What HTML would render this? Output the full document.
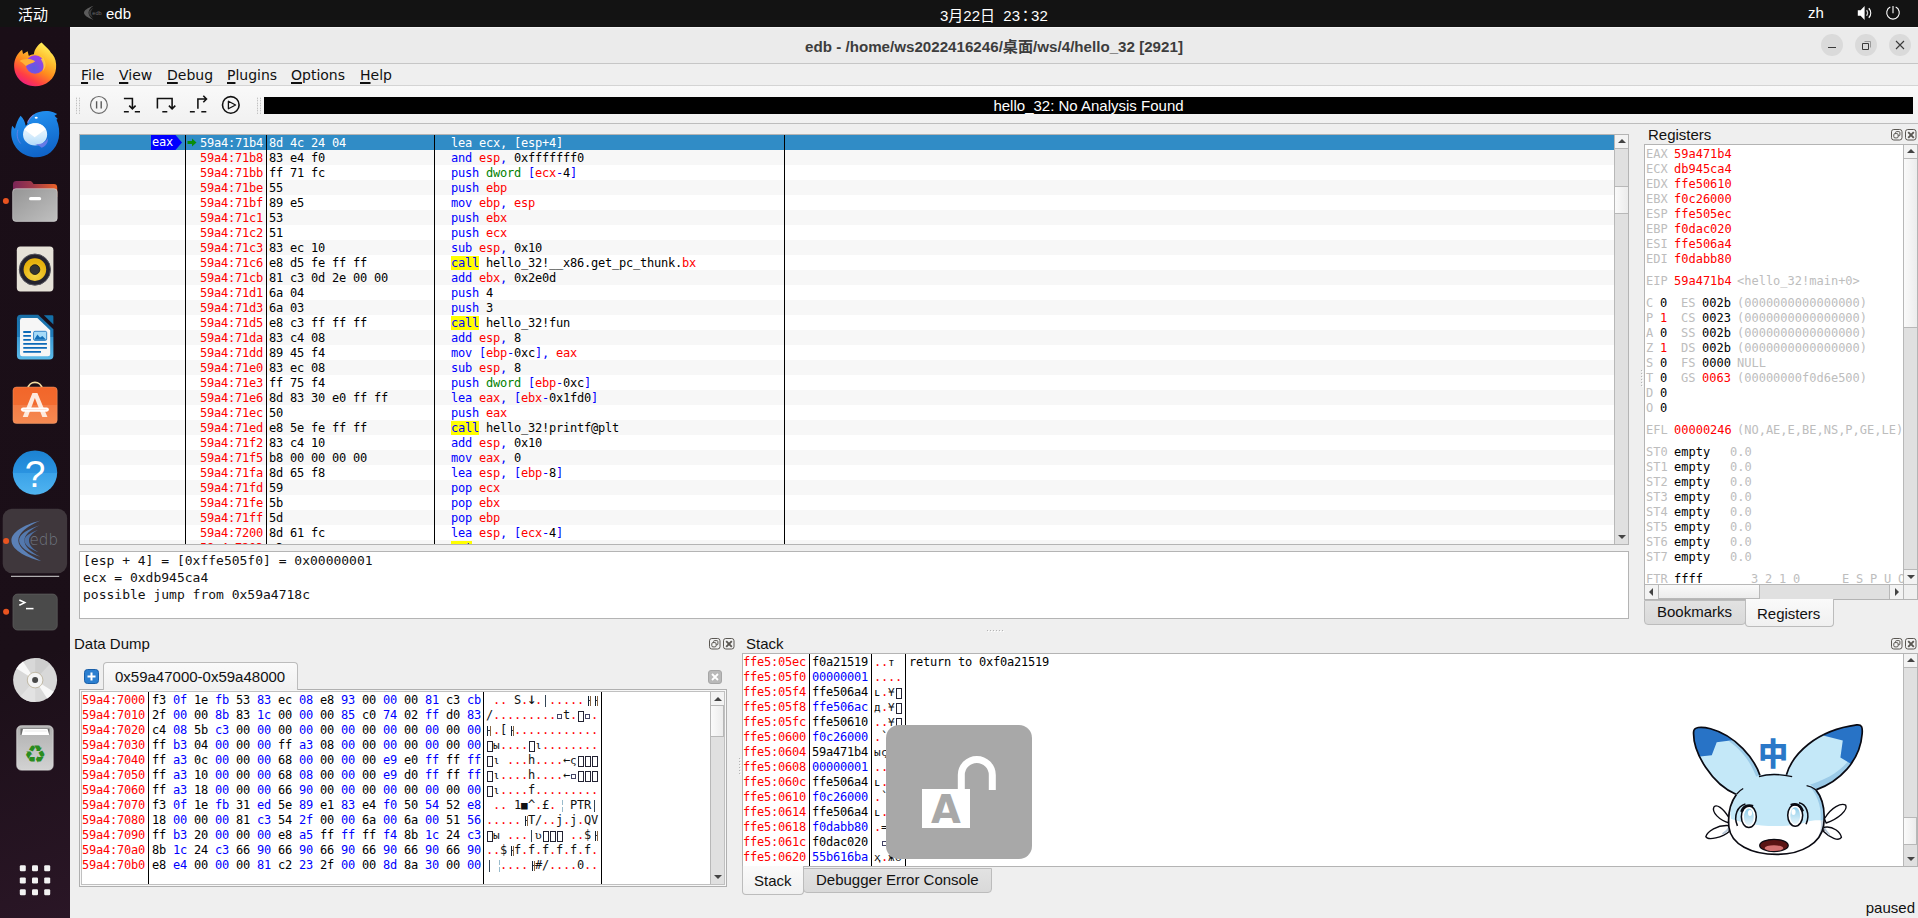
<!DOCTYPE html>
<html lang="zh"><head><meta charset="utf-8"><title>edb</title>
<style>
*{box-sizing:border-box;margin:0;padding:0}
html,body{width:1918px;height:918px;overflow:hidden;background:#efefef}
body{position:relative;font-family:"Liberation Sans","Noto Sans CJK SC",sans-serif;font-size:15px;color:#111}
svg{position:absolute;overflow:visible}
#topbar{position:absolute;left:0;top:0;width:1918px;height:27px;background:#131313;color:#fff}
#topbar span{position:absolute;white-space:nowrap;font-size:15px}
#dock{position:absolute;left:0;top:27px;width:70px;height:891px;background:linear-gradient(160deg,#1a0e17 0%,#1b0f18 70%,#2a1626 100%)}
#dock div{position:absolute}
.dot{left:3px;width:5px;height:5px;border-radius:3px;background:#e95420}
#win{position:absolute;left:70px;top:27px;width:1848px;height:891px;background:#efefef}
#title{position:absolute;left:0;top:0;width:1848px;height:37px;background:#ebebeb;border-top:1px solid #f6f6f6;border-bottom:1px solid #c6c6c6}
#title .t{position:absolute;left:0;width:1848px;top:6px;text-align:center;font-weight:bold;font-size:15.15px;color:#3d3d3d;white-space:nowrap}
.wb{position:absolute;top:6px;width:22px;height:22px;border-radius:11px;background:#dadada}
#menubar{position:absolute;left:0;top:37px;width:1848px;height:22px;background:#efefef;border-bottom:1px solid #d4d4d4;font-family:"DejaVu Sans","Liberation Sans",sans-serif;font-size:14px;color:#111}
#menubar span{position:absolute;top:3px;white-space:nowrap}
#menubar u{text-decoration:underline;text-underline-offset:2px;text-decoration-thickness:1.6px}
#toolbar{position:absolute;left:0;top:59px;width:1848px;height:38px;background:linear-gradient(#f9f9f9,#f1f1f1);border-bottom:1px solid #bdbdbd}
.grip{position:absolute;top:11px;width:5px;height:17px;background-image:radial-gradient(circle,#b4b4b4 0.6px,transparent 0.9px);background-size:3px 2.5px}
#anabar{position:absolute;left:194px;top:11px;width:1649px;height:17px;background:#000;color:#fff;text-align:center;font-size:15px;line-height:18px}
.mono{font-family:"DejaVu Sans Mono","Liberation Mono",monospace;font-size:12px;letter-spacing:-0.225px;white-space:pre}
.r{color:#ff0000}.b{color:#0000ff}.g{color:#007f00}.y{color:#0000ff;background:#ffff00}
/* disasm */
#dis{position:absolute;left:79px;top:134px;width:1550px;height:411px;border:1px solid #b4b4b4;background:#fff;overflow:hidden}
#disin{position:absolute;left:0;top:0;width:1534px;height:409px;overflow:hidden}
.dr{position:absolute;left:0;width:1534px;height:15px;line-height:15px}
.dr.odd{background:#f7f7f7}.dr.even{background:#fff}
.dr.sel{background:#308cc6;color:#fff}
.dr.sel span{color:#fff !important;background:transparent !important}
.dr span.da,.dr span.db,.dr span.di{top:1px}
.dr span.da{position:absolute;left:120px;color:#ff0000}
.dr span.db{position:absolute;left:189px;color:#000}
.dr span.di{position:absolute;left:371px;color:#000}
.vl{position:absolute;top:0;width:1px;height:409px;background:#000;z-index:3}
.dr.sel span.eaxtag{position:absolute;left:71px;top:0;width:24px;height:15px;background:#0000ff !important;color:#fff;padding-left:1px}
svg.eaxarr{left:95px;top:0}
svg.ip{left:107px;top:3px}
/* scrollbars */
.sbv{position:absolute;width:15px;background:#e0e0e0;border-left:1px solid #b8b8b8}
.sbh{position:absolute;height:15px;background:#e0e0e0;border-top:1px solid #b8b8b8}
.sbtn{position:absolute;background:#f3f3f3}
.sthumb{position:absolute;background:linear-gradient(90deg,#fafafa,#ececec);border:1px solid #b8b8b8}
.arr{position:absolute;width:0;height:0}
.arr.up{border-left:4px solid transparent;border-right:4px solid transparent;border-bottom:4px solid #444}
.arr.dn{border-left:4px solid transparent;border-right:4px solid transparent;border-top:4px solid #444}
.arr.lf{border-top:4px solid transparent;border-bottom:4px solid transparent;border-right:4px solid #444}
.arr.rt{border-top:4px solid transparent;border-bottom:4px solid transparent;border-left:4px solid #444}
/* info */
#info{position:absolute;left:79px;top:551px;width:1550px;height:68px;border:1px solid #b4b4b4;background:#fff;font-family:"DejaVu Sans Mono",monospace;font-size:13px;line-height:17px;padding:0 0 0 3px;white-space:pre;color:#111}
.docktitle{position:absolute;font-size:15px;color:#111;white-space:nowrap}
.dbtn{position:absolute;width:11px;height:11px;border:1px solid #555;border-radius:2.5px;background:#ececec}
/* regs */
#regs{position:absolute;left:1644px;top:144px;width:274px;height:456px;border:1px solid #b4b4b4;background:#fff;overflow:hidden}
#regsin{position:absolute;left:0;top:0;width:258px;height:439px;overflow:hidden;color:#000}
#regsin div{position:absolute;left:1px;height:15px;line-height:15px;letter-spacing:0}
#regsin div span{position:absolute;top:0}
.gr{color:#bdbdbd}
/* tabs */
.tab{position:absolute;font-size:15px;color:#111;white-space:nowrap;border:1px solid #bcbcbc}
.tab.on{background:linear-gradient(#fafafa,#f0f0f0)}
.tab.off{background:linear-gradient(#e2e2e2,#d9d9d9)}
.tab span{position:absolute}
/* hex */
#hexpane{position:absolute;left:79px;top:689px;width:648px;height:198px;border:1px solid #b0b0b0;background:#f7f7f7}
#hex{position:absolute;left:1px;top:1px;width:644px;height:194px;border:1px solid #c0c0c0;background:#fff;overflow:hidden}
.hr{position:absolute;left:0;height:15px;line-height:15px;width:628px}
.hr span.ha{position:absolute;left:0;color:#ff0000}
.hr span.hb{position:absolute;left:70px;color:#000}
.hr span.hc{position:absolute;left:404px;width:112px;height:15px}
.hc>*,.sc>*{position:absolute;top:0}
i.t{top:2.5px !important;width:6px;height:11px;border:1px solid #223;margin-left:0.5px}
i.q{top:5.5px !important;width:5px;height:5px;border:1px solid #446;margin-left:1px}
i.h{top:3px !important;width:3.5px;height:10px;border-left:1.2px solid #123;border-right:1px solid #864;background:linear-gradient(#334,#334) 0 4px/3px 1px no-repeat}
i.vb{top:2px !important;width:1.2px;height:12px;background:#345;margin-left:3px}
.sm8{font-size:11px}
.big{font-size:16px;margin-left:-1px;top:-2px !important}
/* stack */
#stack{position:absolute;left:742px;top:653px;width:1176px;height:214px;border:1px solid #b4b4b4;background:#fff;overflow:hidden}
.sr{position:absolute;left:0;height:15px;line-height:15px;width:1150px}
.sr>span{top:1px}
.sr span.sa{position:absolute;left:0px;color:#ff0000}
.sr span.sv{position:absolute;left:69px;color:#000}
.sr span.sv.b{color:#0000ff}
.sr span.sc{position:absolute;left:131px;width:30px;height:15px}
.sr span.sm{position:absolute;left:166px;color:#000}
#caps{position:absolute;left:886px;top:725px;width:146px;height:134px;border-radius:13px;background:#a8a8a8;z-index:10}
#caps .body{position:absolute;left:36px;top:64px;width:48px;height:39px;background:#fff;color:#a8a8a8;font-weight:bold;font-size:38.5px;line-height:40px;text-align:center;font-family:"DejaVu Sans","Liberation Sans",sans-serif;overflow:hidden;text-indent:0;padding-top:1px}
.sph{position:absolute;background:linear-gradient(90deg,#b4b4b4 0 1px,transparent 1px) 0 0/3px 1px repeat-x,linear-gradient(90deg,#fff 0 1px,transparent 1px) 1px 1px/3px 1px repeat-x}
.spv{position:absolute;background:linear-gradient(#b4b4b4 0 1px,transparent 1px) 0 0/1px 3px repeat-y,linear-gradient(#fff 0 1px,transparent 1px) 1px 1px/1px 3px repeat-y}
#status{position:absolute;right:3px;top:899px;font-size:15px;color:#111}
#mascot{position:absolute;left:1680px;top:710px;width:200px;height:156px;z-index:9}
#mascot svg{left:0;top:0}
</style></head><body>

<div id="topbar">
 <span style="left:18px;top:3px">活动</span>
 <svg style="left:83px;top:5px" width="20" height="16" viewBox="0 0 20 16"><path d="M10.5 0.8C4.5 3 1 5.5 1 7.8S4.5 12.8 10.5 15C7 12.5 5.6 10.2 5.6 7.8S7 3.2 10.5 0.8Z" fill="#5c5c5c"/><path d="M10.5 2.8C7.5 4.3 5.6 6 5.6 7.8S7.5 11.5 10.5 13C8.8 11.3 8 9.6 8 7.8S8.8 4.4 10.5 2.8Z" fill="#3a3a3a"/><text x="9.3" y="9.8" font-size="5.6" fill="#6a6a6a" font-family="Liberation Sans,sans-serif">edb</text></svg>
 <span style="left:106px;top:5px">edb</span>
 <span style="left:940px;top:4px">3月22日&nbsp; 23<b style="font-weight:normal;font-family:'Noto Sans CJK JP',sans-serif;display:inline-block;width:11px;text-indent:-2px">：</b>32</span>
 <span style="left:1808px;top:4px">zh</span>
 <svg style="left:1857px;top:5px" width="16" height="16" viewBox="0 0 16 16"><path d="M0.8 5.2H3.6L7.6 1V15L3.6 10.8H0.8Z" fill="#fff"/><path d="M9.6 5.2C10.8 6.8 10.8 9.2 9.6 10.8" stroke="#ccc" stroke-width="1.2" fill="none"/><path d="M11.8 3.2C14.3 6 14.3 10 11.8 12.8" stroke="#fff" stroke-width="1.3" fill="none"/></svg>
 <svg style="left:1884.5px;top:5px" width="16" height="16" viewBox="0 0 16 16"><path d="M5.3 2.1A6.3 6.3 0 1 0 10.7 2.1" stroke="#fff" stroke-width="1.1" fill="none"/><path d="M8 1V8.2" stroke="#fff" stroke-width="1.1"/></svg>
</div>

<div id="dock">
<svg style="left:0;top:0" width="70" height="891" viewBox="0 27 70 891">
<defs>
 <linearGradient id="ffg" x1="0.8" y1="0.05" x2="0.25" y2="1"><stop offset="0" stop-color="#fff35c"/><stop offset="0.3" stop-color="#ffbd2e"/><stop offset="0.55" stop-color="#ff8a1e"/><stop offset="0.8" stop-color="#ff3d46"/><stop offset="1" stop-color="#ea1a86"/></linearGradient>
 <radialGradient id="ffp" cx="0.45" cy="0.7" r="0.7"><stop offset="0" stop-color="#5a5fe0"/><stop offset="1" stop-color="#a23ce8"/></radialGradient>
 <linearGradient id="tbg" x1="0.3" y1="0" x2="0.6" y2="1"><stop offset="0" stop-color="#2393f2"/><stop offset="1" stop-color="#0f62c6"/></linearGradient>
 <linearGradient id="tbe" x1="0" y1="0" x2="0" y2="1"><stop offset="0" stop-color="#ffffff"/><stop offset="1" stop-color="#b4dcfa"/></linearGradient>
 <linearGradient id="fob" x1="0" y1="0" x2="1" y2="0"><stop offset="0" stop-color="#7a2557"/><stop offset="0.45" stop-color="#a03a4a"/><stop offset="1" stop-color="#ea6228"/></linearGradient>
 <linearGradient id="fof" x1="0" y1="0" x2="1" y2="1"><stop offset="0" stop-color="#959595"/><stop offset="1" stop-color="#c0c0c0"/></linearGradient>
 <radialGradient id="rby" cx="0.5" cy="0.75" r="0.6"><stop offset="0" stop-color="#f6d648"/><stop offset="1" stop-color="#e6b10c"/></radialGradient>
 <linearGradient id="wrg" x1="0" y1="0" x2="0" y2="1"><stop offset="0" stop-color="#196fa6"/><stop offset="0.49" stop-color="#1f7cba"/><stop offset="0.5" stop-color="#3a9ad4"/><stop offset="1" stop-color="#5cbae8"/></linearGradient>
 <linearGradient id="asg" x1="0" y1="0" x2="0" y2="1"><stop offset="0" stop-color="#f2662a"/><stop offset="0.49" stop-color="#f26c30"/><stop offset="0.5" stop-color="#f47d46"/><stop offset="1" stop-color="#f58a52"/></linearGradient>
 <linearGradient id="hpg" x1="0" y1="0" x2="0" y2="1"><stop offset="0" stop-color="#1c82d2"/><stop offset="0.5" stop-color="#2a93e0"/><stop offset="0.51" stop-color="#3aa2e8"/><stop offset="1" stop-color="#50b4f0"/></linearGradient>
 <linearGradient id="trg" x1="0" y1="0" x2="0" y2="1"><stop offset="0" stop-color="#b0b0b0"/><stop offset="1" stop-color="#d2d2d2"/></linearGradient>
</defs>
<!-- firefox -->
<g transform="translate(0,30) scale(0.07628)">
 <path d="M545 165C600 225 645 255 668 298L690 322C725 365 742 430 735 500C725 640 600 737 460 737C300 737 185 620 185 470C185 380 230 300 290 258L302 315L362 280L378 340C400 325 420 320 445 318C450 260 490 200 545 165Z" fill="url(#ffg)"/>
 <circle cx="460" cy="452" r="122" fill="url(#ffp)"/>
 <path d="M258 405C300 378 400 368 462 410C425 442 385 440 340 472C312 440 285 420 258 405Z" fill="#ffb238"/>
 <path d="M520 335C560 350 580 372 575 378C560 370 545 372 535 380C560 420 585 470 560 540C620 480 610 390 520 335Z" fill="#ffd04a" opacity="0.85"/>
</g>
<!-- thunderbird -->
<g transform="translate(0,100) scale(0.07628)">
 <path d="M270 205C310 240 330 290 336 338L356 322C362 280 390 230 440 190C500 145 620 130 700 160L750 185L715 205L757 250L740 256C775 330 785 420 770 500C740 650 620 752 470 752C300 752 160 620 148 460C145 410 150 370 160 338L196 378C210 310 235 250 270 205Z" fill="url(#tbg)"/>
 <path d="M362 300C372 260 400 225 440 195" stroke="#9a90f0" stroke-width="14" fill="none" opacity="0.8"/>
 <ellipse cx="460" cy="452" rx="158" ry="146" fill="url(#tbe)"/>
 <path d="M318 392L455 492L602 388C570 330 520 306 460 306C400 306 345 335 318 392Z" fill="#fff"/>
 <path d="M318 392L455 492L602 388" stroke="#cfe6f8" stroke-width="6" fill="none"/>
 <path d="M625 500C600 560 520 590 450 572C490 585 520 600 545 625C590 610 640 560 625 500Z" fill="#6f7ce8" opacity="0.9"/>
 <ellipse cx="475" cy="232" rx="20" ry="14" fill="#fff"/>
 <path d="M235 390C215 450 225 520 270 570" stroke="#8a84ea" stroke-width="12" fill="none" opacity="0.7"/>
</g>
<!-- files -->
<g transform="translate(0,168) scale(0.07628)">
 <path d="M170 215Q170 170 215 170H400Q415 170 440 210H705Q750 210 750 255V380H170Z" fill="url(#fob)"/>
 <rect x="166" y="272" width="584" height="428" rx="42" fill="url(#fof)" stroke="#d8d8d8" stroke-width="8"/>
 <rect x="380" y="380" width="160" height="44" rx="22" fill="#fff"/>
</g>
<circle cx="5.9" cy="201" r="3" fill="#e95420"/>
<!-- rhythmbox -->
<rect x="16.8" y="246.6" width="36.6" height="44.8" rx="3.6" fill="#e6e2d8"/>
<circle cx="34.9" cy="269.6" r="15.6" fill="#24232d" stroke="#55545c" stroke-width="1"/>
<circle cx="34.9" cy="269.6" r="11.3" fill="url(#rby)"/>
<circle cx="34.9" cy="269.6" r="4.9" fill="#333" stroke="#111" stroke-width="0.8"/>
<!-- writer -->
<g transform="translate(0,304) scale(0.07628)">
 <path d="M222 190Q222 140 272 140H500L700 330V680Q700 728 650 728H272Q222 728 222 680Z" fill="url(#wrg)"/>
 <path d="M262 215Q262 185 292 185H490L658 345V655Q658 685 628 685H292Q262 685 262 655Z" fill="#f6f6f6"/>
 <path d="M575 148H682Q700 148 700 166V268Z" fill="#1470a8"/>
 <g stroke="#0d6ab8" stroke-width="24"><path d="M305 367H405M305 418H405M305 470H405M305 523H615M305 576H615M305 628H537"/></g>
 <rect x="440" y="358" width="172" height="120" rx="18" fill="#a6dbf8" stroke="#0d6ab8" stroke-width="10"/>
 <path d="M448 470L490 400L525 440L555 420L605 470Z" fill="#1470b8"/>
</g>
<!-- app store -->
<g transform="translate(0,372) scale(0.07628)">
 <path d="M365 228V215A95 95 0 0 1 552 215V228" stroke="#f5dca0" stroke-width="24" fill="none"/>
 <rect x="170" y="197" width="580" height="478" rx="46" fill="url(#asg)" stroke="#f7a070" stroke-width="6"/>
 <path d="M425 275H490L622 590H555L457 340L365 590H298Z" fill="#fdeade"/>
 <rect x="275" y="465" width="366" height="56" rx="28" fill="#fff"/>
 <path d="M305 493H610" stroke="#f8c0a8" stroke-width="6"/>
</g>
<!-- help -->
<circle cx="35" cy="472.6" r="22.2" fill="url(#hpg)"/>
<text x="35" y="486.6" text-anchor="middle" font-family="Liberation Sans,sans-serif" font-size="37" fill="#fff">?</text>
<!-- edb tile -->
<rect x="2.7" y="508.8" width="64.4" height="64.4" rx="9.5" fill="#3f373c"/>
<g transform="translate(0,500) scale(0.1525)">
 <path d="M266 135C150 165 75 215 75 265C75 318 150 370 270 400C190 360 120 315 120 265C120 215 185 170 266 135Z" fill="#5b80b6"/>
 <path d="M262 165C180 190 125 225 125 265C125 305 180 345 265 372C200 340 160 305 160 265C160 228 200 192 262 165Z" fill="#5479ae"/>
 <path d="M250 195C195 215 160 238 160 265C160 292 195 320 252 342C210 318 190 292 190 265C190 240 212 217 250 195Z" fill="#4d70a4"/>
</g>
<text x="29.5" y="545" font-family="DejaVu Sans,Liberation Sans,sans-serif" font-weight="200" font-size="16.5" fill="#727985" textLength="28.5" lengthAdjust="spacingAndGlyphs">edb</text>
<circle cx="6.1" cy="540.9" r="3" fill="#e95420"/>
<rect x="11" y="575.8" width="48.2" height="1" fill="#d6d6d6"/>
<!-- terminal -->
<rect x="13" y="594.1" width="44.2" height="35.9" rx="4.5" fill="#4a4a4a" stroke="#5c5c5c" stroke-width="0.8"/>
<path d="M19.3 600L24.8 602.6L19.3 605.2" stroke="#fff" stroke-width="1.5" fill="none"/>
<path d="M26 608.6H33.5" stroke="#fff" stroke-width="1.5"/>
<circle cx="6.1" cy="611.8" r="3" fill="#e95420"/>
<!-- cd -->
<circle cx="35.1" cy="680.1" r="22" fill="#d8d8d8"/>
<path d="M35.1 680.1L16.5 668.5A22 22 0 0 1 23 661.6Z" fill="#f8f8f8"/>
<path d="M35.1 680.1L53.7 691.7A22 22 0 0 1 47.2 698.6Z" fill="#f8f8f8"/>
<path d="M35.1 680.1L35.1 658.1A22 22 0 0 1 50 663.8Z" fill="#cdcdcd"/>
<path d="M35.1 680.1L35.1 702.1A22 22 0 0 1 20.2 696.4Z" fill="#e2e2e2"/>
<circle cx="35.1" cy="680.1" r="7.8" fill="#f4f4f4" stroke="#a89a78" stroke-width="0.6"/>
<circle cx="35.1" cy="680.1" r="3" fill="#484848"/>
<!-- trash -->
<rect x="16.8" y="725.8" width="36.3" height="44.3" rx="4.5" fill="url(#trg)" stroke="#dcdcdc" stroke-width="0.8"/>
<path d="M20.5 728.5H49.5V735H20.5Z" fill="#6a6a6a"/>
<path d="M23 729H47.5L49.3 735H21.5Z" fill="#fff"/>
<path d="M24.5 731H46.8" stroke="#ccc" stroke-width="0.5"/>
<text x="35.1" y="763" text-anchor="middle" font-family="DejaVu Sans,sans-serif" font-size="25" fill="#2a8c1e">♻</text>
<!-- grid -->
<g fill="#f2f2f2">
 <rect x="19.8" y="865.2" width="6" height="6" rx="1.2"/><rect x="32" y="865.2" width="6" height="6" rx="1.2"/><rect x="44.2" y="865.2" width="6" height="6" rx="1.2"/>
 <rect x="19.8" y="877.4" width="6" height="6" rx="1.2"/><rect x="32" y="877.4" width="6" height="6" rx="1.2"/><rect x="44.2" y="877.4" width="6" height="6" rx="1.2"/>
 <rect x="19.8" y="889.3" width="6" height="6" rx="1.2"/><rect x="32" y="889.3" width="6" height="6" rx="1.2"/><rect x="44.2" y="889.3" width="6" height="6" rx="1.2"/>
</g>
</svg>

</div>

<div id="win">
 <div id="title"><div class="t">edb - /home/ws2022416246/桌面/ws/4/hello_32 [2921]</div>
  <div class="wb" style="left:1751px"></div><div class="wb" style="left:1785px"></div><div class="wb" style="left:1819px"></div>
  <svg style="left:1751px;top:6px" width="90" height="22" viewBox="0 0 90 22"><g stroke="#3a3a3a" stroke-width="1" fill="none"><path d="M7 13.5H15"/><path d="M41.5 9.5H47.5V15.5H41.5Z"/><path d="M43.5 7.5H49.5V13.5" stroke="#999"/><path d="M75 7L83 15M83 7L75 15" stroke-width="1.1"/></g></svg>
 </div>
 <div id="menubar">
  <span style="left:11px"><u>F</u>ile</span>
  <span style="left:49px"><u>V</u>iew</span>
  <span style="left:97px"><u>D</u>ebug</span>
  <span style="left:157px"><u>P</u>lugins</span>
  <span style="left:221px"><u>O</u>ptions</span>
  <span style="left:290px"><u>H</u>elp</span>
 </div>
 <div id="toolbar">
  <div class="grip" style="left:5px"></div>
  <svg style="left:18px;top:9px" width="160" height="22" viewBox="88 95 160 22">
   <g fill="none" stroke="#111" stroke-width="1.55">
    <circle cx="98.9" cy="104.9" r="8.4" stroke="#6a6a6a" stroke-width="1.2"/>
    <path d="M96.6 101.3V108.6M101.2 101.3V108.6" stroke="#5a5a5a" stroke-width="1.4"/>
    <path d="M123.9 98.4H132.4V108.3M129.2 105.6L132.4 108.8L135.6 105.6M123.9 111.8H128.8M134.8 111.8H140"/>
    <path d="M157.4 108.6V98.5H172.1V108.3M168.9 105.6L172.1 108.8L175.3 105.6M162.3 111.8H167.3"/>
    <path d="M189.9 111.8H194.8M201.3 111.8H206.3M197.9 108.8V99H206M203.3 95.8L206.5 99L203.3 102.2"/>
    <circle cx="230.8" cy="104.9" r="8.3" stroke-width="1.6"/>
    <path d="M228.4 101.2V108.8L235.6 105Z" stroke-width="1.3" stroke-linejoin="round"/>
   </g>
  </svg>
  <div class="grip" style="left:186px"></div>
  <div id="anabar">hello_32: No Analysis Found</div>
 </div>
</div>

<div id="dis" class="mono">
 <div id="disin">
<div class="dr sel" style="top:0px"><span class="eaxtag">eax</span><svg class="eaxarr" width="8" height="15" viewBox="0 0 8 15"><path d="M0 0L0.5 0L7 7.5L0.5 15L0 15Z" fill="#0000ff"/></svg><svg class="ip" width="10" height="9" viewBox="0 0 10 9"><path d="M0.5 3H5V0.5L9.5 4.5L5 8.5V6H0.5Z" fill="#0a8c0a"/></svg><span class="da">59a4:71b4</span><span class="db">8d 4c 24 04</span><span class="di"><span class="b">lea</span> <span class="r">ecx</span><span class="b">,</span> <span class="b">[</span><span class="r">esp</span><span class="b">+</span>4<span class="b">]</span></span></div>
<div class="dr odd" style="top:15px"><span class="da">59a4:71b8</span><span class="db">83 e4 f0</span><span class="di"><span class="b">and</span> <span class="r">esp</span><span class="b">,</span> 0xfffffff0</span></div>
<div class="dr even" style="top:30px"><span class="da">59a4:71bb</span><span class="db">ff 71 fc</span><span class="di"><span class="b">push</span> <span class="g">dword</span> <span class="b">[</span><span class="r">ecx</span><span class="b">-</span>4<span class="b">]</span></span></div>
<div class="dr odd" style="top:45px"><span class="da">59a4:71be</span><span class="db">55</span><span class="di"><span class="b">push</span> <span class="r">ebp</span></span></div>
<div class="dr even" style="top:60px"><span class="da">59a4:71bf</span><span class="db">89 e5</span><span class="di"><span class="b">mov</span> <span class="r">ebp</span><span class="b">,</span> <span class="r">esp</span></span></div>
<div class="dr odd" style="top:75px"><span class="da">59a4:71c1</span><span class="db">53</span><span class="di"><span class="b">push</span> <span class="r">ebx</span></span></div>
<div class="dr even" style="top:90px"><span class="da">59a4:71c2</span><span class="db">51</span><span class="di"><span class="b">push</span> <span class="r">ecx</span></span></div>
<div class="dr odd" style="top:105px"><span class="da">59a4:71c3</span><span class="db">83 ec 10</span><span class="di"><span class="b">sub</span> <span class="r">esp</span><span class="b">,</span> 0x10</span></div>
<div class="dr even" style="top:120px"><span class="da">59a4:71c6</span><span class="db">e8 d5 fe ff ff</span><span class="di"><span class="y">call</span> hello_32!__x86.get_pc_thunk.<span class="r">bx</span></span></div>
<div class="dr odd" style="top:135px"><span class="da">59a4:71cb</span><span class="db">81 c3 0d 2e 00 00</span><span class="di"><span class="b">add</span> <span class="r">ebx</span><span class="b">,</span> 0x2e0d</span></div>
<div class="dr even" style="top:150px"><span class="da">59a4:71d1</span><span class="db">6a 04</span><span class="di"><span class="b">push</span> 4</span></div>
<div class="dr odd" style="top:165px"><span class="da">59a4:71d3</span><span class="db">6a 03</span><span class="di"><span class="b">push</span> 3</span></div>
<div class="dr even" style="top:180px"><span class="da">59a4:71d5</span><span class="db">e8 c3 ff ff ff</span><span class="di"><span class="y">call</span> hello_32!fun</span></div>
<div class="dr odd" style="top:195px"><span class="da">59a4:71da</span><span class="db">83 c4 08</span><span class="di"><span class="b">add</span> <span class="r">esp</span><span class="b">,</span> 8</span></div>
<div class="dr even" style="top:210px"><span class="da">59a4:71dd</span><span class="db">89 45 f4</span><span class="di"><span class="b">mov</span> <span class="b">[</span><span class="r">ebp</span><span class="b">-</span>0xc<span class="b">]</span><span class="b">,</span> <span class="r">eax</span></span></div>
<div class="dr odd" style="top:225px"><span class="da">59a4:71e0</span><span class="db">83 ec 08</span><span class="di"><span class="b">sub</span> <span class="r">esp</span><span class="b">,</span> 8</span></div>
<div class="dr even" style="top:240px"><span class="da">59a4:71e3</span><span class="db">ff 75 f4</span><span class="di"><span class="b">push</span> <span class="g">dword</span> <span class="b">[</span><span class="r">ebp</span><span class="b">-</span>0xc<span class="b">]</span></span></div>
<div class="dr odd" style="top:255px"><span class="da">59a4:71e6</span><span class="db">8d 83 30 e0 ff ff</span><span class="di"><span class="b">lea</span> <span class="r">eax</span><span class="b">,</span> <span class="b">[</span><span class="r">ebx</span><span class="b">-</span>0x1fd0<span class="b">]</span></span></div>
<div class="dr even" style="top:270px"><span class="da">59a4:71ec</span><span class="db">50</span><span class="di"><span class="b">push</span> <span class="r">eax</span></span></div>
<div class="dr odd" style="top:285px"><span class="da">59a4:71ed</span><span class="db">e8 5e fe ff ff</span><span class="di"><span class="y">call</span> hello_32!printf@plt</span></div>
<div class="dr even" style="top:300px"><span class="da">59a4:71f2</span><span class="db">83 c4 10</span><span class="di"><span class="b">add</span> <span class="r">esp</span><span class="b">,</span> 0x10</span></div>
<div class="dr odd" style="top:315px"><span class="da">59a4:71f5</span><span class="db">b8 00 00 00 00</span><span class="di"><span class="b">mov</span> <span class="r">eax</span><span class="b">,</span> 0</span></div>
<div class="dr even" style="top:330px"><span class="da">59a4:71fa</span><span class="db">8d 65 f8</span><span class="di"><span class="b">lea</span> <span class="r">esp</span><span class="b">,</span> <span class="b">[</span><span class="r">ebp</span><span class="b">-</span>8<span class="b">]</span></span></div>
<div class="dr odd" style="top:345px"><span class="da">59a4:71fd</span><span class="db">59</span><span class="di"><span class="b">pop</span> <span class="r">ecx</span></span></div>
<div class="dr even" style="top:360px"><span class="da">59a4:71fe</span><span class="db">5b</span><span class="di"><span class="b">pop</span> <span class="r">ebx</span></span></div>
<div class="dr odd" style="top:375px"><span class="da">59a4:71ff</span><span class="db">5d</span><span class="di"><span class="b">pop</span> <span class="r">ebp</span></span></div>
<div class="dr even" style="top:390px"><span class="da">59a4:7200</span><span class="db">8d 61 fc</span><span class="di"><span class="b">lea</span> <span class="r">esp</span><span class="b">,</span> <span class="b">[</span><span class="r">ecx</span><span class="b">-</span>4<span class="b">]</span></span></div>
<div class="dr odd" style="top:405px"><span class="da">59a4:7203</span><span class="db">c3</span><span class="di"><span class="y">ret</span></span></div>
 </div>
 <div class="vl" style="left:105px"></div>
 <div class="vl" style="left:186px"></div>
 <div class="vl" style="left:354px"></div>
 <div class="vl" style="left:704px"></div>
 <div class="sbv" style="left:1534px;top:0;height:409px">
  <div class="sbtn" style="left:0;top:0;width:14px;height:14px;border-bottom:1px solid #b8b8b8"><div class="arr up" style="left:3px;top:4px"></div></div>
  <div class="sthumb" style="left:-1px;top:51px;width:15px;height:28px"></div>
  <div class="sbtn" style="left:0;top:394px;width:14px;height:15px;background:transparent"><div class="arr dn" style="left:3px;top:6px"></div></div>
 </div>
</div>

<div id="info"><div style="position:relative;top:-0.5px">[esp + 4] = [0xffe505f0] = 0x00000001
ecx = 0xdb945ca4
possible jump from 0x59a4718c</div></div>

<div class="docktitle" style="left:1648px;top:126px">Registers</div>
<svg class="dbt" style="left:1891px;top:129px" width="26" height="12" viewBox="0 0 26 12"><g fill="none" stroke="#5a5752"><rect x="0.5" y="0.5" width="10.5" height="10.5" rx="2.3" fill="#f2f2f2"/><rect x="14.5" y="0.5" width="10.5" height="10.5" rx="2.3" fill="#f2f2f2"/><rect x="4.6" y="2.6" width="4.3" height="4.3" rx="1"/><rect x="2.8" y="4.6" width="4.3" height="4.3" rx="1.2" fill="#f6f6f6"/><path d="M17.2 3.2L22.8 8.8M22.8 3.2L17.2 8.8" stroke-width="1.9"/></g></svg>
<div id="regs" class="mono">
 <div id="regsin">
<div style="top:2px"><span class="gr" style="left:0px">EAX</span><span class="r" style="left:28px">59a471b4</span></div>
<div style="top:17px"><span class="gr" style="left:0px">ECX</span><span class="r" style="left:28px">db945ca4</span></div>
<div style="top:32px"><span class="gr" style="left:0px">EDX</span><span class="r" style="left:28px">ffe50610</span></div>
<div style="top:47px"><span class="gr" style="left:0px">EBX</span><span class="r" style="left:28px">f0c26000</span></div>
<div style="top:62px"><span class="gr" style="left:0px">ESP</span><span class="r" style="left:28px">ffe505ec</span></div>
<div style="top:77px"><span class="gr" style="left:0px">EBP</span><span class="r" style="left:28px">f0dac020</span></div>
<div style="top:92px"><span class="gr" style="left:0px">ESI</span><span class="r" style="left:28px">ffe506a4</span></div>
<div style="top:107px"><span class="gr" style="left:0px">EDI</span><span class="r" style="left:28px">f0dabb80</span></div>
<div style="top:129px"><span class="gr" style="left:0px">EIP</span><span class="r" style="left:28px">59a471b4</span><span class="gr" style="left:91px">&lt;hello_32!main+0&gt;</span></div>
<div style="top:151px"><span class="gr" style="left:0px">C</span><span class="" style="left:14px">0</span><span class="gr" style="left:35px">ES</span><span class="" style="left:56px">002b</span><span class="gr" style="left:91px">(0000000000000000)</span></div>
<div style="top:166px"><span class="gr" style="left:0px">P</span><span class="r" style="left:14px">1</span><span class="gr" style="left:35px">CS</span><span class="" style="left:56px">0023</span><span class="gr" style="left:91px">(0000000000000000)</span></div>
<div style="top:181px"><span class="gr" style="left:0px">A</span><span class="" style="left:14px">0</span><span class="gr" style="left:35px">SS</span><span class="" style="left:56px">002b</span><span class="gr" style="left:91px">(0000000000000000)</span></div>
<div style="top:196px"><span class="gr" style="left:0px">Z</span><span class="r" style="left:14px">1</span><span class="gr" style="left:35px">DS</span><span class="" style="left:56px">002b</span><span class="gr" style="left:91px">(0000000000000000)</span></div>
<div style="top:211px"><span class="gr" style="left:0px">S</span><span class="" style="left:14px">0</span><span class="gr" style="left:35px">FS</span><span class="" style="left:56px">0000</span><span class="gr" style="left:91px">NULL</span></div>
<div style="top:226px"><span class="gr" style="left:0px">T</span><span class="" style="left:14px">0</span><span class="gr" style="left:35px">GS</span><span class="r" style="left:56px">0063</span><span class="gr" style="left:91px">(00000000f0d6e500)</span></div>
<div style="top:241px"><span class="gr" style="left:0px">D</span><span class="" style="left:14px">0</span></div>
<div style="top:256px"><span class="gr" style="left:0px">O</span><span class="" style="left:14px">0</span></div>
<div style="top:278px"><span class="gr" style="left:0px">EFL</span><span class="r" style="left:28px">00000246</span><span class="gr" style="left:91px">(NO,AE,E,BE,NS,P,GE,LE)</span></div>
<div style="top:300px"><span class="gr" style="left:0px">ST0</span><span class="" style="left:28px">empty</span><span class="gr" style="left:84px">0.0</span></div>
<div style="top:315px"><span class="gr" style="left:0px">ST1</span><span class="" style="left:28px">empty</span><span class="gr" style="left:84px">0.0</span></div>
<div style="top:330px"><span class="gr" style="left:0px">ST2</span><span class="" style="left:28px">empty</span><span class="gr" style="left:84px">0.0</span></div>
<div style="top:345px"><span class="gr" style="left:0px">ST3</span><span class="" style="left:28px">empty</span><span class="gr" style="left:84px">0.0</span></div>
<div style="top:360px"><span class="gr" style="left:0px">ST4</span><span class="" style="left:28px">empty</span><span class="gr" style="left:84px">0.0</span></div>
<div style="top:375px"><span class="gr" style="left:0px">ST5</span><span class="" style="left:28px">empty</span><span class="gr" style="left:84px">0.0</span></div>
<div style="top:390px"><span class="gr" style="left:0px">ST6</span><span class="" style="left:28px">empty</span><span class="gr" style="left:84px">0.0</span></div>
<div style="top:405px"><span class="gr" style="left:0px">ST7</span><span class="" style="left:28px">empty</span><span class="gr" style="left:84px">0.0</span></div>
<div style="top:427px"><span class="gr" style="left:0px">FTR</span><span class="" style="left:28px">ffff</span><span class="gr" style="left:105px">3</span><span class="gr" style="left:119px">2</span><span class="gr" style="left:133px">1</span><span class="gr" style="left:147px">0</span><span class="gr" style="left:196px">E</span><span class="gr" style="left:210px">S</span><span class="gr" style="left:224px">P</span><span class="gr" style="left:238px">U</span><span class="gr" style="left:252px">O</span><span class="gr" style="left:266px">Z</span><span class="gr" style="left:280px">D</span><span class="gr" style="left:294px">I</span></div>
 </div>
 <div class="sbv" style="left:258px;top:0;height:439px">
  <div class="sbtn" style="left:0;top:0;width:14px;height:14px;border-bottom:1px solid #b8b8b8"><div class="arr up" style="left:3px;top:4px"></div></div>
  <div class="sthumb" style="left:-1px;top:14px;width:15px;height:169px;border-top:none"></div>
  <div class="sbtn" style="left:0;top:424px;width:14px;height:15px;border-top:1px solid #b8b8b8"><div class="arr dn" style="left:3px;top:5px"></div></div>
 </div>
 <div class="sbh" style="left:0;top:439px;width:258px">
  <div class="sbtn" style="left:0;top:0;width:14px;height:14px;border-right:1px solid #b8b8b8"><div class="arr lf" style="left:4px;top:3px"></div></div>
  <div class="sthumb" style="left:13px;top:-1px;width:102px;height:15px;background:linear-gradient(#fafafa,#ececec)"></div>
  <div class="sbtn" style="left:244px;top:0;width:14px;height:14px;border-left:1px solid #b8b8b8"><div class="arr rt" style="left:5px;top:3px"></div></div>
 </div>
 <div style="position:absolute;left:258px;top:439px;width:15px;height:15px;background:#efefef;border-left:1px solid #b8b8b8;border-top:1px solid #b8b8b8"></div>
</div>
<div class="tab off" style="left:1644px;top:600px;width:102px;height:25px;border-radius:0 0 4px 4px"><span style="left:12px;top:2px">Bookmarks</span></div>
<div class="tab on" style="left:1745px;top:599px;width:89px;height:28px;border-top:none;border-radius:0 0 4px 4px"><span style="left:11px;top:6px">Registers</span></div>

<div class="docktitle" style="left:74px;top:635px">Data Dump</div>
<svg class="dbt" style="left:709px;top:638px" width="26" height="12" viewBox="0 0 26 12"><g fill="none" stroke="#5a5752"><rect x="0.5" y="0.5" width="10.5" height="10.5" rx="2.3" fill="#f2f2f2"/><rect x="14.5" y="0.5" width="10.5" height="10.5" rx="2.3" fill="#f2f2f2"/><rect x="4.6" y="2.6" width="4.3" height="4.3" rx="1"/><rect x="2.8" y="4.6" width="4.3" height="4.3" rx="1.2" fill="#f6f6f6"/><path d="M17.2 3.2L22.8 8.8M22.8 3.2L17.2 8.8" stroke-width="1.9"/></g></svg>
<svg style="left:84px;top:669px" width="15" height="15" viewBox="0 0 15 15"><rect x="0.5" y="0.5" width="14" height="14" rx="3" fill="#2b7fd0" stroke="#1a5fa8"/><path d="M7.5 3.5V11.5M3.5 7.5H11.5" stroke="#fff" stroke-width="2"/></svg>
<div class="tab on" style="left:103px;top:662px;width:195px;height:28px;border-bottom:none;border-radius:4px 4px 0 0;z-index:2"><span style="left:11px;top:5px">0x59a47000-0x59a48000</span></div>
<div style="position:absolute;left:708px;top:670px;width:14px;height:14px;border-radius:3px;background:#b9b9b9;border:1px solid #a6a6a6"><svg style="left:2px;top:2px" width="8" height="8" viewBox="0 0 8 8"><path d="M1 1L7 7M7 1L1 7" stroke="#fff" stroke-width="1.8"/></svg></div>
<div id="hexpane"><div id="hex" class="mono">
<div class="hr" style="top:1px"><span class="ha">59a4:7000</span><span class="hb">f3 <span class="b">0f</span> 1e <span class="b">fb</span> 53 <span class="b">83</span> ec <span class="b">08</span> e8 <span class="b">93</span> 00 <span class="b">00</span> 00 <span class="b">81</span> c3 <span class="b">cb</span></span><span class="hc"><span class="r" style="left:7px">.</span><span class="r" style="left:14px">.</span><span style="left:28px">S</span><span class="r" style="left:35px">.</span><span class="big" style="left:42px">↓</span><span class="r" style="left:49px">.</span><i class="vb" style="left:56px"></i><span class="r" style="left:63px">.</span><span class="r" style="left:70px">.</span><span class="r" style="left:77px">.</span><span class="r" style="left:84px">.</span><span class="r" style="left:91px">.</span><i class="h" style="left:101.5px"></i><i class="h" style="left:108.5px"></i></span></div>
<div class="hr" style="top:16px"><span class="ha">59a4:7010</span><span class="hb">2f <span class="b">00</span> 00 <span class="b">8b</span> 83 <span class="b">1c</span> 00 <span class="b">00</span> 00 <span class="b">85</span> c0 <span class="b">74</span> 02 <span class="b">ff</span> d0 <span class="b">83</span></span><span class="hc"><span style="left:0px">/</span><span class="r" style="left:7px">.</span><span class="r" style="left:14px">.</span><span class="r" style="left:21px">.</span><span class="r" style="left:28px">.</span><span class="r" style="left:35px">.</span><span class="r" style="left:42px">.</span><span class="r" style="left:49px">.</span><span class="r" style="left:56px">.</span><span class="r" style="left:63px">.</span><i class="q" style="left:70px"></i><span style="left:77px">t</span><span class="r" style="left:84px">.</span><i class="t" style="left:91px"></i><i class="q" style="left:98px"></i><span class="r" style="left:105px">.</span></span></div>
<div class="hr" style="top:31px"><span class="ha">59a4:7020</span><span class="hb">c4 <span class="b">08</span> 5b <span class="b">c3</span> 00 <span class="b">00</span> 00 <span class="b">00</span> 00 <span class="b">00</span> 00 <span class="b">00</span> 00 <span class="b">00</span> 00 <span class="b">00</span></span><span class="hc"><i class="h" style="left:1px"></i><span class="r" style="left:7px">.</span><span style="left:14px">[</span><i class="h" style="left:24.5px"></i><span class="r" style="left:28px">.</span><span class="r" style="left:35px">.</span><span class="r" style="left:42px">.</span><span class="r" style="left:49px">.</span><span class="r" style="left:56px">.</span><span class="r" style="left:63px">.</span><span class="r" style="left:70px">.</span><span class="r" style="left:77px">.</span><span class="r" style="left:84px">.</span><span class="r" style="left:91px">.</span><span class="r" style="left:98px">.</span><span class="r" style="left:105px">.</span></span></div>
<div class="hr" style="top:46px"><span class="ha">59a4:7030</span><span class="hb">ff <span class="b">b3</span> 04 <span class="b">00</span> 00 <span class="b">00</span> ff <span class="b">a3</span> 08 <span class="b">00</span> 00 <span class="b">00</span> 00 <span class="b">00</span> 00 <span class="b">00</span></span><span class="hc"><i class="t" style="left:0px"></i><span class="sm8" style="left:7px">ы</span><span class="r" style="left:14px">.</span><span class="r" style="left:21px">.</span><span class="r" style="left:28px">.</span><span class="r" style="left:35px">.</span><i class="t" style="left:42px"></i><span class="sm8" style="left:49px">ι</span><span class="r" style="left:56px">.</span><span class="r" style="left:63px">.</span><span class="r" style="left:70px">.</span><span class="r" style="left:77px">.</span><span class="r" style="left:84px">.</span><span class="r" style="left:91px">.</span><span class="r" style="left:98px">.</span><span class="r" style="left:105px">.</span></span></div>
<div class="hr" style="top:61px"><span class="ha">59a4:7040</span><span class="hb">ff <span class="b">a3</span> 0c <span class="b">00</span> 00 <span class="b">00</span> 68 <span class="b">00</span> 00 <span class="b">00</span> 00 <span class="b">e9</span> e0 <span class="b">ff</span> ff <span class="b">ff</span></span><span class="hc"><i class="t" style="left:0px"></i><span class="sm8" style="left:7px">ι</span><span class="r" style="left:21px">.</span><span class="r" style="left:28px">.</span><span class="r" style="left:35px">.</span><span style="left:42px">h</span><span class="r" style="left:49px">.</span><span class="r" style="left:56px">.</span><span class="r" style="left:63px">.</span><span class="r" style="left:70px">.</span><span style="left:77px">←</span><span class="sm8" style="left:84px">ς</span><i class="t" style="left:91px"></i><i class="t" style="left:98px"></i><i class="t" style="left:105px"></i></span></div>
<div class="hr" style="top:76px"><span class="ha">59a4:7050</span><span class="hb">ff <span class="b">a3</span> 10 <span class="b">00</span> 00 <span class="b">00</span> 68 <span class="b">08</span> 00 <span class="b">00</span> 00 <span class="b">e9</span> d0 <span class="b">ff</span> ff <span class="b">ff</span></span><span class="hc"><i class="t" style="left:0px"></i><span class="sm8" style="left:7px">ι</span><span class="r" style="left:14px">.</span><span class="r" style="left:21px">.</span><span class="r" style="left:28px">.</span><span class="r" style="left:35px">.</span><span style="left:42px">h</span><span class="r" style="left:49px">.</span><span class="r" style="left:56px">.</span><span class="r" style="left:63px">.</span><span class="r" style="left:70px">.</span><span style="left:77px">←</span><i class="q" style="left:84px"></i><i class="t" style="left:91px"></i><i class="t" style="left:98px"></i><i class="t" style="left:105px"></i></span></div>
<div class="hr" style="top:91px"><span class="ha">59a4:7060</span><span class="hb">ff <span class="b">a3</span> 18 <span class="b">00</span> 00 <span class="b">00</span> 66 <span class="b">90</span> 00 <span class="b">00</span> 00 <span class="b">00</span> 00 <span class="b">00</span> 00 <span class="b">00</span></span><span class="hc"><i class="t" style="left:0px"></i><span class="sm8" style="left:7px">ι</span><span class="r" style="left:14px">.</span><span class="r" style="left:21px">.</span><span class="r" style="left:28px">.</span><span class="r" style="left:35px">.</span><span style="left:42px">f</span><span class="r" style="left:49px">.</span><span class="r" style="left:56px">.</span><span class="r" style="left:63px">.</span><span class="r" style="left:70px">.</span><span class="r" style="left:77px">.</span><span class="r" style="left:84px">.</span><span class="r" style="left:91px">.</span><span class="r" style="left:98px">.</span><span class="r" style="left:105px">.</span></span></div>
<div class="hr" style="top:106px"><span class="ha">59a4:7070</span><span class="hb">f3 <span class="b">0f</span> 1e <span class="b">fb</span> 31 <span class="b">ed</span> 5e <span class="b">89</span> e1 <span class="b">83</span> e4 <span class="b">f0</span> 50 <span class="b">54</span> 52 <span class="b">e8</span></span><span class="hc"><span class="r" style="left:7px">.</span><span class="r" style="left:14px">.</span><span style="left:28px">1</span><span class="sm8" style="left:35px">■</span><span style="left:42px">^</span><span class="r" style="left:49px">.</span><span style="left:56px">£</span><span class="r" style="left:63px">.</span><i class="vb" style="left:72.5px;background:linear-gradient(#9bc 0 5px,transparent 5px 7px,#9bc 7px)"></i><span style="left:84px">P</span><span style="left:91px">T</span><span style="left:98px">R</span><i class="vb" style="left:105px"></i></span></div>
<div class="hr" style="top:121px"><span class="ha">59a4:7080</span><span class="hb">18 <span class="b">00</span> 00 <span class="b">00</span> 81 <span class="b">c3</span> 54 <span class="b">2f</span> 00 <span class="b">00</span> 6a <span class="b">00</span> 6a <span class="b">00</span> 51 <span class="b">56</span></span><span class="hc"><span class="r" style="left:0px">.</span><span class="r" style="left:7px">.</span><span class="r" style="left:14px">.</span><span class="r" style="left:21px">.</span><span class="r" style="left:28px">.</span><i class="h" style="left:38.5px"></i><span style="left:42px">T</span><span style="left:49px">/</span><span class="r" style="left:56px">.</span><span class="r" style="left:63px">.</span><span style="left:70px">j</span><span class="r" style="left:77px">.</span><span style="left:84px">j</span><span class="r" style="left:91px">.</span><span style="left:98px">Q</span><span style="left:105px">V</span></span></div>
<div class="hr" style="top:136px"><span class="ha">59a4:7090</span><span class="hb">ff <span class="b">b3</span> 20 <span class="b">00</span> 00 <span class="b">00</span> e8 <span class="b">a5</span> ff <span class="b">ff</span> ff <span class="b">f4</span> 8b <span class="b">1c</span> 24 <span class="b">c3</span></span><span class="hc"><i class="t" style="left:0px"></i><span class="sm8" style="left:7px">ы</span><span class="r" style="left:21px">.</span><span class="r" style="left:28px">.</span><span class="r" style="left:35px">.</span><i class="vb" style="left:42px"></i><span class="sm8" style="left:49px">ʋ</span><i class="t" style="left:56px"></i><i class="t" style="left:63px"></i><i class="t" style="left:70px"></i><span class="r" style="left:84px">.</span><span class="r" style="left:91px">.</span><span style="left:98px">$</span><i class="h" style="left:108.5px"></i></span></div>
<div class="hr" style="top:151px"><span class="ha">59a4:70a0</span><span class="hb">8b <span class="b">1c</span> 24 <span class="b">c3</span> 66 <span class="b">90</span> 66 <span class="b">90</span> 66 <span class="b">90</span> 66 <span class="b">90</span> 66 <span class="b">90</span> 66 <span class="b">90</span></span><span class="hc"><span class="r" style="left:0px">.</span><span class="r" style="left:7px">.</span><span style="left:14px">$</span><i class="h" style="left:24.5px"></i><span style="left:28px">f</span><span class="r" style="left:35px">.</span><span style="left:42px">f</span><span class="r" style="left:49px">.</span><span style="left:56px">f</span><span class="r" style="left:63px">.</span><span style="left:70px">f</span><span class="r" style="left:77px">.</span><span style="left:84px">f</span><span class="r" style="left:91px">.</span><span style="left:98px">f</span><span class="r" style="left:105px">.</span></span></div>
<div class="hr" style="top:166px"><span class="ha">59a4:70b0</span><span class="hb">e8 <span class="b">e4</span> 00 <span class="b">00</span> 00 <span class="b">81</span> c2 <span class="b">23</span> 2f <span class="b">00</span> 00 <span class="b">8d</span> 8a <span class="b">30</span> 00 <span class="b">00</span></span><span class="hc"><i class="vb" style="left:0px"></i><i class="vb" style="left:9.5px;background:linear-gradient(#9bc 0 5px,transparent 5px 7px,#9bc 7px)"></i><span class="r" style="left:14px">.</span><span class="r" style="left:21px">.</span><span class="r" style="left:28px">.</span><span class="r" style="left:35px">.</span><i class="h" style="left:45.5px"></i><span style="left:49px">#</span><span style="left:56px">/</span><span class="r" style="left:63px">.</span><span class="r" style="left:70px">.</span><span class="r" style="left:77px">.</span><span class="r" style="left:84px">.</span><span style="left:91px">0</span><span class="r" style="left:98px">.</span><span class="r" style="left:105px">.</span></span></div>
 <div class="vl" style="left:66px;height:192px"></div>
 <div class="vl" style="left:401px;height:192px"></div>
 <div class="vl" style="left:519px;height:192px"></div>
 <div class="sbv" style="left:628px;top:0;height:192px;width:14px">
  <div class="sbtn" style="left:0;top:0;width:13px;height:14px;border-bottom:1px solid #b8b8b8"><div class="arr up" style="left:3px;top:5px"></div></div>
  <div class="sthumb" style="left:-1px;top:13px;width:14px;height:32px"></div>
  <div class="sbtn" style="left:0;top:178px;width:13px;height:14px;background:transparent"><div class="arr dn" style="left:3px;top:5px"></div></div>
 </div>
</div></div>

<div class="docktitle" style="left:746px;top:635px">Stack</div>
<svg class="dbt" style="left:1891px;top:638px" width="26" height="12" viewBox="0 0 26 12"><g fill="none" stroke="#5a5752"><rect x="0.5" y="0.5" width="10.5" height="10.5" rx="2.3" fill="#f2f2f2"/><rect x="14.5" y="0.5" width="10.5" height="10.5" rx="2.3" fill="#f2f2f2"/><rect x="4.6" y="2.6" width="4.3" height="4.3" rx="1"/><rect x="2.8" y="4.6" width="4.3" height="4.3" rx="1.2" fill="#f6f6f6"/><path d="M17.2 3.2L22.8 8.8M22.8 3.2L17.2 8.8" stroke-width="1.9"/></g></svg>
<div id="stack" class="mono">
<div class="sr" style="top:0px"><span class="sa">ffe5:05ec</span><span class="sv">f0a21519</span><span class="sc"><span class="r" style="left:0px">.</span><span class="r" style="left:7px">.</span><span class="sm8" style="left:14px">т</span></span><span class="sm">return to 0xf0a21519</span></div>
<div class="sr" style="top:15px"><span class="sa">ffe5:05f0</span><span class="sv b">00000001</span><span class="sc"><span class="r" style="left:0px">.</span><span class="r" style="left:7px">.</span><span class="r" style="left:14px">.</span><span class="r" style="left:21px">.</span></span><span class="sm"></span></div>
<div class="sr" style="top:30px"><span class="sa">ffe5:05f4</span><span class="sv">ffe506a4</span><span class="sc"><span class="sm8" style="left:0px">ʟ</span><span class="r" style="left:7px">.</span><span class="sm8" style="left:14px">¥</span><i class="t" style="left:21px"></i></span><span class="sm"></span></div>
<div class="sr" style="top:45px"><span class="sa">ffe5:05f8</span><span class="sv b">ffe506ac</span><span class="sc"><span class="sm8" style="left:0px">д</span><span class="r" style="left:7px">.</span><span class="sm8" style="left:14px">¥</span><i class="t" style="left:21px"></i></span><span class="sm"></span></div>
<div class="sr" style="top:60px"><span class="sa">ffe5:05fc</span><span class="sv">ffe50610</span><span class="sc"><span class="r" style="left:0px">.</span><span class="r" style="left:7px">.</span><span class="sm8" style="left:14px">¥</span><i class="t" style="left:21px"></i></span><span class="sm"></span></div>
<div class="sr" style="top:75px"><span class="sa">ffe5:0600</span><span class="sv b">f0c26000</span><span class="sc"><span class="r" style="left:0px">.</span><span style="left:7px">`</span></span><span class="sm"></span></div>
<div class="sr" style="top:90px"><span class="sa">ffe5:0604</span><span class="sv">59a471b4</span><span class="sc"><span class="sm8" style="left:0px">ы</span><span class="sm8" style="left:7px">ς</span></span><span class="sm"></span></div>
<div class="sr" style="top:105px"><span class="sa">ffe5:0608</span><span class="sv b">00000001</span><span class="sc"><span class="r" style="left:0px">.</span><span class="r" style="left:7px">.</span><span class="r" style="left:14px">.</span><span class="r" style="left:21px">.</span></span><span class="sm"></span></div>
<div class="sr" style="top:120px"><span class="sa">ffe5:060c</span><span class="sv">ffe506a4</span><span class="sc"><span class="sm8" style="left:0px">ʟ</span><span class="r" style="left:7px">.</span></span><span class="sm"></span></div>
<div class="sr" style="top:135px"><span class="sa">ffe5:0610</span><span class="sv b">f0c26000</span><span class="sc"><span class="r" style="left:0px">.</span><span style="left:7px">`</span></span><span class="sm"></span></div>
<div class="sr" style="top:150px"><span class="sa">ffe5:0614</span><span class="sv">ffe506a4</span><span class="sc"><span class="sm8" style="left:0px">ʟ</span><span class="r" style="left:7px">.</span></span><span class="sm"></span></div>
<div class="sr" style="top:165px"><span class="sa">ffe5:0618</span><span class="sv b">f0dabb80</span><span class="sc"><span class="r" style="left:0px">.</span><span style="left:7px">=</span></span><span class="sm"></span></div>
<div class="sr" style="top:180px"><span class="sa">ffe5:061c</span><span class="sv">f0dac020</span><span class="sc"><i class="q" style="left:7px"></i></span><span class="sm"></span></div>
<div class="sr" style="top:195px"><span class="sa">ffe5:0620</span><span class="sv b">55b616ba</span><span class="sc"><span class="sm8" style="left:0px">ҳ</span><span class="r" style="left:7px">.</span><span class="sm8" style="left:14px">ж</span><span class="sm8" style="left:21px">ʊ</span></span><span class="sm"></span></div>
 <div class="vl" style="left:66px;height:212px"></div>
 <div class="vl" style="left:128px;height:212px"></div>
 <div class="vl" style="left:162px;height:212px"></div>
 <div class="sbv" style="left:1160px;top:0;height:212px;width:14px">
  <div class="sbtn" style="left:0;top:0;width:13px;height:14px;border-bottom:1px solid #b8b8b8"><div class="arr up" style="left:3px;top:4px"></div></div>
  <div class="sthumb" style="left:-1px;top:163px;width:14px;height:28px"></div>
  <div class="sbtn" style="left:0;top:197px;width:13px;height:15px;background:transparent"><div class="arr dn" style="left:3px;top:6px"></div></div>
 </div>
</div>
<div class="tab on" style="left:742px;top:866px;width:62px;height:29px;border-top:none;border-radius:0 0 4px 4px"><span style="left:11px;top:6px">Stack</span></div>
<div class="tab off" style="left:803px;top:868px;width:189px;height:25px;border-radius:0 0 4px 4px"><span style="left:12px;top:2px">Debugger Error Console</span></div>

<div class="sph" style="left:987px;top:630px;width:18px;height:2px"></div>
<div class="spv" style="left:739px;top:758px;width:2px;height:18px"></div>
<div class="spv" style="left:1641px;top:370px;width:2px;height:18px"></div>
<div id="caps"><div class="body">A</div>
 <svg style="left:0;top:0" width="146" height="134" viewBox="886 725 146 134"><path d="M961.3 789.5V775A15.5 15.5 0 0 1 992.3 775V790" fill="none" stroke="#fff" stroke-width="7"/></svg>
</div>
<div id="mascot">
<svg width="200" height="156" viewBox="0 0 1177 918">
<defs>
 <clipPath id="earL"><path d="M472 388C440 290 330 150 180 110C120 95 80 100 80 130C75 250 190 440 332 497Z"/></clipPath>
 <clipPath id="earR"><path d="M625 385C660 260 800 120 1040 88C1070 85 1075 100 1072 140C1060 300 940 420 800 470Z"/></clipPath>
 <linearGradient id="eyeg" x1="0" y1="0" x2="0" y2="1"><stop offset="0" stop-color="#8fcdea"/><stop offset="1" stop-color="#e8f6fc"/></linearGradient>
</defs>
<g clip-path="url(#earL)">
 <rect x="60" y="80" width="440" height="440" fill="#c4e8f8"/>
 <path d="M300 165C380 230 445 320 476 388L450 395C415 310 370 240 290 185Z" fill="#9ccbe8"/>
 <path d="M60 80H260L318 176L216 190L187 266L60 280Z" fill="#2873c6"/>
</g>
<g clip-path="url(#earR)">
 <rect x="600" y="60" width="500" height="440" fill="#c4e8f8"/>
 <path d="M1090 180C1040 300 960 400 810 465L745 445C900 400 1000 330 1080 160Z" fill="#9ccbe8"/>
 <path d="M838 132L1100 60V330L1000 314L944 280L958 180L848 152Z" fill="#2873c6"/>
 <path d="M1080 95C1085 170 1060 250 1000 314L1040 330L1100 200Z" fill="#1f62b4"/>
</g>
<g stroke="#0a0a12" stroke-width="10" fill="none" stroke-linejoin="round">
 <path d="M472 388C440 290 330 150 180 110C120 95 80 100 80 130C75 250 190 440 332 497"/>
 <path d="M625 385C660 260 800 120 1040 88C1070 85 1075 100 1072 140C1060 300 940 420 800 470"/>
</g>
<!-- tufts -->
<g fill="#fff" stroke="#0a0a12" stroke-width="8">
 <path d="M292 640C250 570 215 555 200 570C185 600 230 650 292 665Z"/>
 <path d="M285 680C220 675 160 715 152 745C165 770 250 750 290 715Z"/>
 <path d="M850 640C890 570 950 545 975 560C990 590 930 640 860 665Z"/>
 <path d="M850 690C900 680 945 720 950 750C935 775 880 750 845 715Z"/>
</g>
<path d="M250 730C270 720 285 700 290 690M880 735C865 720 855 705 850 695" stroke="#b8c8d8" stroke-width="10" fill="none"/>
<path d="M332 497L472 388L625 385L800 470L700 520L400 520Z" fill="#c4e8f8"/>
<!-- head -->
<path d="M332 497C370 440 420 400 472 388C520 375 580 375 625 385C700 400 760 430 800 470C840 520 855 600 845 680C830 780 720 850 570 850C420 850 300 790 288 690C280 610 300 540 332 497Z" fill="#fff"/>
<path d="M332 497C370 440 420 400 472 388C520 375 580 375 625 385C700 400 760 430 800 470C840 520 855 600 845 650C800 648 770 650 740 660C700 675 600 690 480 680C420 672 350 660 300 640C295 580 310 530 332 497Z" fill="#c4e8f8"/>
<path d="M300 620C300 560 315 520 332 497C370 440 420 400 472 388C520 375 580 375 625 385C700 400 760 430 800 470C830 510 845 560 846 620" fill="none" stroke="#c4e8f8" stroke-width="8"/>
<path d="M750 440C800 480 835 560 828 652L846 650C850 560 830 490 800 470Z" fill="#9ccbe8"/>
<path d="M828 652C835 700 820 740 800 770L835 720C845 700 848 670 846 650Z" fill="#c8d4e0"/>
<path d="M332 497C300 540 280 610 288 690C300 790 420 850 570 850C720 850 830 780 845 680C855 600 840 520 800 470" fill="none" stroke="#0a0a12" stroke-width="10"/>
<path d="M465 392C520 375 580 375 660 392" fill="none" stroke="#0a0a12" stroke-width="8"/>
<path d="M332 497C345 480 360 468 372 462M800 470C780 455 765 448 745 445" fill="none" stroke="#0a0a12" stroke-width="8"/>
<!-- eyes -->
<g>
 <ellipse cx="405" cy="628" rx="44" ry="64" fill="#fff" stroke="#0a0a12" stroke-width="9"/>
 <ellipse cx="405" cy="630" rx="29" ry="50" fill="url(#eyeg)"/>
 <ellipse cx="412" cy="606" rx="12" ry="18" fill="#fff"/>
 <path d="M362 600C370 570 395 555 430 566" fill="none" stroke="#0a0a12" stroke-width="16"/>
 <path d="M338 682C312 620 340 565 385 553" fill="none" stroke="#0a0a12" stroke-width="9"/>
 <ellipse cx="678" cy="620" rx="44" ry="64" fill="#fff" stroke="#0a0a12" stroke-width="9"/>
 <ellipse cx="678" cy="622" rx="29" ry="50" fill="url(#eyeg)"/>
 <ellipse cx="668" cy="600" rx="12" ry="18" fill="#fff"/>
 <path d="M652 560C685 546 712 562 722 596" fill="none" stroke="#0a0a12" stroke-width="16"/>
 <path d="M742 672C768 610 742 555 700 546" fill="none" stroke="#0a0a12" stroke-width="9"/>
</g>
<!-- mouth -->
<ellipse cx="553" cy="797" rx="84" ry="36" fill="#5a1414" stroke="#0a0a12" stroke-width="7"/>
<ellipse cx="553" cy="813" rx="55" ry="17" fill="#d47272"/>
<text x="548" y="325" text-anchor="middle" font-family="Noto Sans CJK SC,WenQuanYi Zen Hei,sans-serif" font-weight="900" font-size="178" fill="#2a78c8">中</text>
</svg>

</div>
<div id="status">paused</div>
</body></html>
